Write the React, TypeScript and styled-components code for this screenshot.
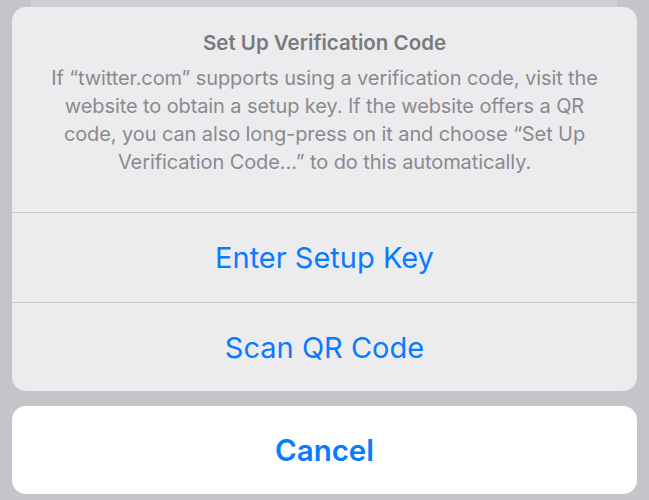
import React from "react";
import styled, { createGlobalStyle } from "styled-components";

const Global = createGlobalStyle`
  html, body {
    margin: 0;
    padding: 0;
    background: #c4c4c9;
  }
  body {
    font-family: Inter, "Noto Sans", "Liberation Sans", sans-serif;
    -webkit-font-smoothing: antialiased;
  }
`;

const Page = styled.div`
  width: 649px;
  height: 500px;
  box-sizing: border-box;
  padding: 0 12px;
  display: flex;
  flex-direction: column;
  background: #c4c4c9;
  overflow: hidden;
`;

const BackCard = styled.div`
  height: 7px;
  margin: 0 20px 0 19px;
  background: #cfcfd3;
  flex: none;
`;

const Sheet = styled.div`
  background: #ececee;
  border-radius: 14px;
  display: flex;
  flex-direction: column;
  overflow: hidden;
  flex: none;
`;

const Header = styled.div`
  height: 205px;
  box-sizing: border-box;
  padding: 23px 20px 0;
  display: flex;
  flex-direction: column;
  align-items: center;
  text-align: center;
`;

const Title = styled.div`
  font-size: 20.5px;
  line-height: 25px;
  font-weight: 600;
  color: #7a7a7e;
`;

const Message = styled.div`
  margin-top: 9px;
  font-size: 20px;
  line-height: 28px;
  font-weight: 400;
  color: #8a8a8e;
  letter-spacing: -0.1px;
  white-space: nowrap;
`;

const Divider = styled.div`
  height: 1px;
  background: #c9c9cd;
  flex: none;
`;

const Action = styled.div<{ $bold?: boolean; $height: number }>`
  height: ${(p) => p.$height}px;
  display: flex;
  align-items: center;
  justify-content: center;
  font-size: ${(p) => (p.$bold ? 29.5 : 29)}px;
  font-weight: ${(p) => (p.$bold ? 600 : 400)};
  color: #0a7aff;
`;

const CancelCard = styled.div`
  margin-top: 15px;
  background: #ffffff;
  border-radius: 14px;
  overflow: hidden;
  flex: none;
`;

export default function App() {
  return (
    <>
      <Global />
      <Page>
        <BackCard />
        <Sheet>
          <Header>
            <Title>Set Up Verification Code</Title>
            <Message>
              If “twitter.com” supports using a verification code, visit the
              <br />
              website to obtain a setup key. If the website offers a QR
              <br />
              code, you can also long-press on it and choose “Set Up
              <br />
              Verification Code…” to do this automatically.
            </Message>
          </Header>
          <Divider />
          <Action $height={89}>Enter Setup Key</Action>
          <Divider />
          <Action $height={88}>Scan QR Code</Action>
        </Sheet>
        <CancelCard>
          <Action $bold $height={88}>Cancel</Action>
        </CancelCard>
      </Page>
    </>
  );
}
